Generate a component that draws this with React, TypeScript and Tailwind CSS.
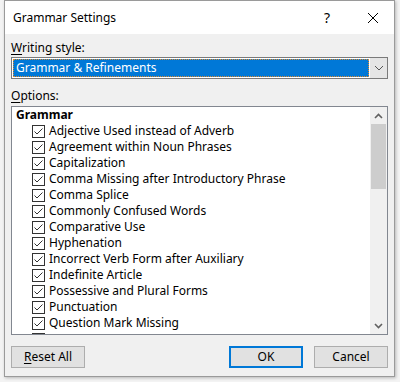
import React from 'react';

const items = [
  'Adjective Used instead of Adverb',
  'Agreement within Noun Phrases',
  'Capitalization',
  'Comma Missing after Introductory Phrase',
  'Comma Splice',
  'Commonly Confused Words',
  'Comparative Use',
  'Hyphenation',
  'Incorrect Verb Form after Auxiliary',
  'Indefinite Article',
  'Possessive and Plural Forms',
  'Punctuation',
  'Question Mark Missing',
];

function Check() {
  return (
    <span className="flex h-[13px] w-[13px] shrink-0 items-center justify-center border border-[#333] bg-white">
      <svg width="11" height="11" viewBox="0 0 11 11">
        <path d="M1.5 5.5 L4 8 L9.5 2.5" fill="none" stroke="#333" strokeWidth="1" />
      </svg>
    </span>
  );
}

function Btn({ children, primary }: { children: React.ReactNode; primary?: boolean }) {
  return (
    <button
      className={
        primary
          ? 'h-[22px] w-[74px] border-2 border-[#0078d7] bg-[#e1e1e1] text-[12px] text-black'
          : 'h-[22px] w-[74px] border border-[#adadad] bg-[#e1e1e1] text-[12px] text-black'
      }
    >
      {children}
    </button>
  );
}

export default function App() {
  return (
    <div
      className="h-[382px] w-[400px] overflow-hidden bg-[#f3f3f3] text-[12px] text-black"
      style={{ fontFamily: '"Noto Sans", "Segoe UI", sans-serif' }}
    >
      <div className="ml-[4px] flex h-[377px] w-[391px] flex-col border border-[#9a9a9a] bg-[#f0f0f0] shadow-[1px_1px_3px_rgba(0,0,0,0.25)]">
        {/* title bar */}
        <div className="flex h-[33px] shrink-0 items-center bg-white pl-[8px]">
          <span className="text-[12px]">Grammar Settings</span>
          <span className="ml-auto mr-[37px] text-[14px]">?</span>
          <svg width="12" height="12" viewBox="0 0 12 12" className="mr-[15px]">
            <path d="M1 1 L11 11 M11 1 L1 11" stroke="#000" strokeWidth="1" />
          </svg>
        </div>

        <div className="flex flex-1 flex-col px-[6px]">
          <div className="mt-[6px] h-[16px] leading-[16px]">
            <span className="underline underline-offset-2">W</span>riting style:
          </div>
          <div className="mt-[1px] flex h-[22px] border border-[#7a7a7a] bg-white">
            <div className="m-[1px] flex flex-1 items-center border border-dotted border-[#e08a2c] bg-[#0078d7] pl-[2px] text-white">
              Grammar &amp; Refinements
            </div>
            <div className="flex w-[17px] items-center justify-center bg-[#e5e5e5]">
              <svg width="10" height="6" viewBox="0 0 10 6">
                <path d="M1 1 L5 5 L9 1" fill="none" stroke="#555" strokeWidth="1" />
              </svg>
            </div>
          </div>

          <div className="mt-[9px] h-[16px] leading-[16px]">
            <span className="underline underline-offset-2">O</span>ptions:
          </div>
          <div className="mt-[2px] flex h-[229px] border border-[#828790] bg-white">
            <div className="flex-1 overflow-hidden pl-[4px]">
              <div className="h-[16px] font-bold leading-[16px]">Grammar</div>
              {items.map((t) => (
                <div key={t} className="flex h-[16px] items-center gap-[4px] pl-[16px] leading-[16px]">
                  <Check />
                  <span className="whitespace-nowrap">{t}</span>
                </div>
              ))}
              <div className="flex h-[16px] items-center pl-[16px]">
                <Check />
              </div>
            </div>
            <div className="flex w-[17px] flex-col bg-[#f0f0f0]">
              <div className="flex h-[17px] items-center justify-center">
                <svg width="9" height="6" viewBox="0 0 9 6">
                  <path d="M1 5 L4.5 1.5 L8 5" fill="none" stroke="#606060" strokeWidth="1.6" />
                </svg>
              </div>
              <div className="mx-[1px] h-[65px] bg-[#cdcdcd]" />
              <div className="flex-1" />
              <div className="flex h-[17px] items-center justify-center">
                <svg width="9" height="6" viewBox="0 0 9 6">
                  <path d="M1 1 L4.5 4.5 L8 1" fill="none" stroke="#606060" strokeWidth="1.6" />
                </svg>
              </div>
            </div>
          </div>

          <div className="mt-[11px] flex">
            <Btn>
              <span className="underline underline-offset-2">R</span>eset All
            </Btn>
            <div className="ml-auto flex gap-[11px]">
              <Btn primary>OK</Btn>
              <Btn>Cancel</Btn>
            </div>
          </div>
        </div>
      </div>
    </div>
  );
}
